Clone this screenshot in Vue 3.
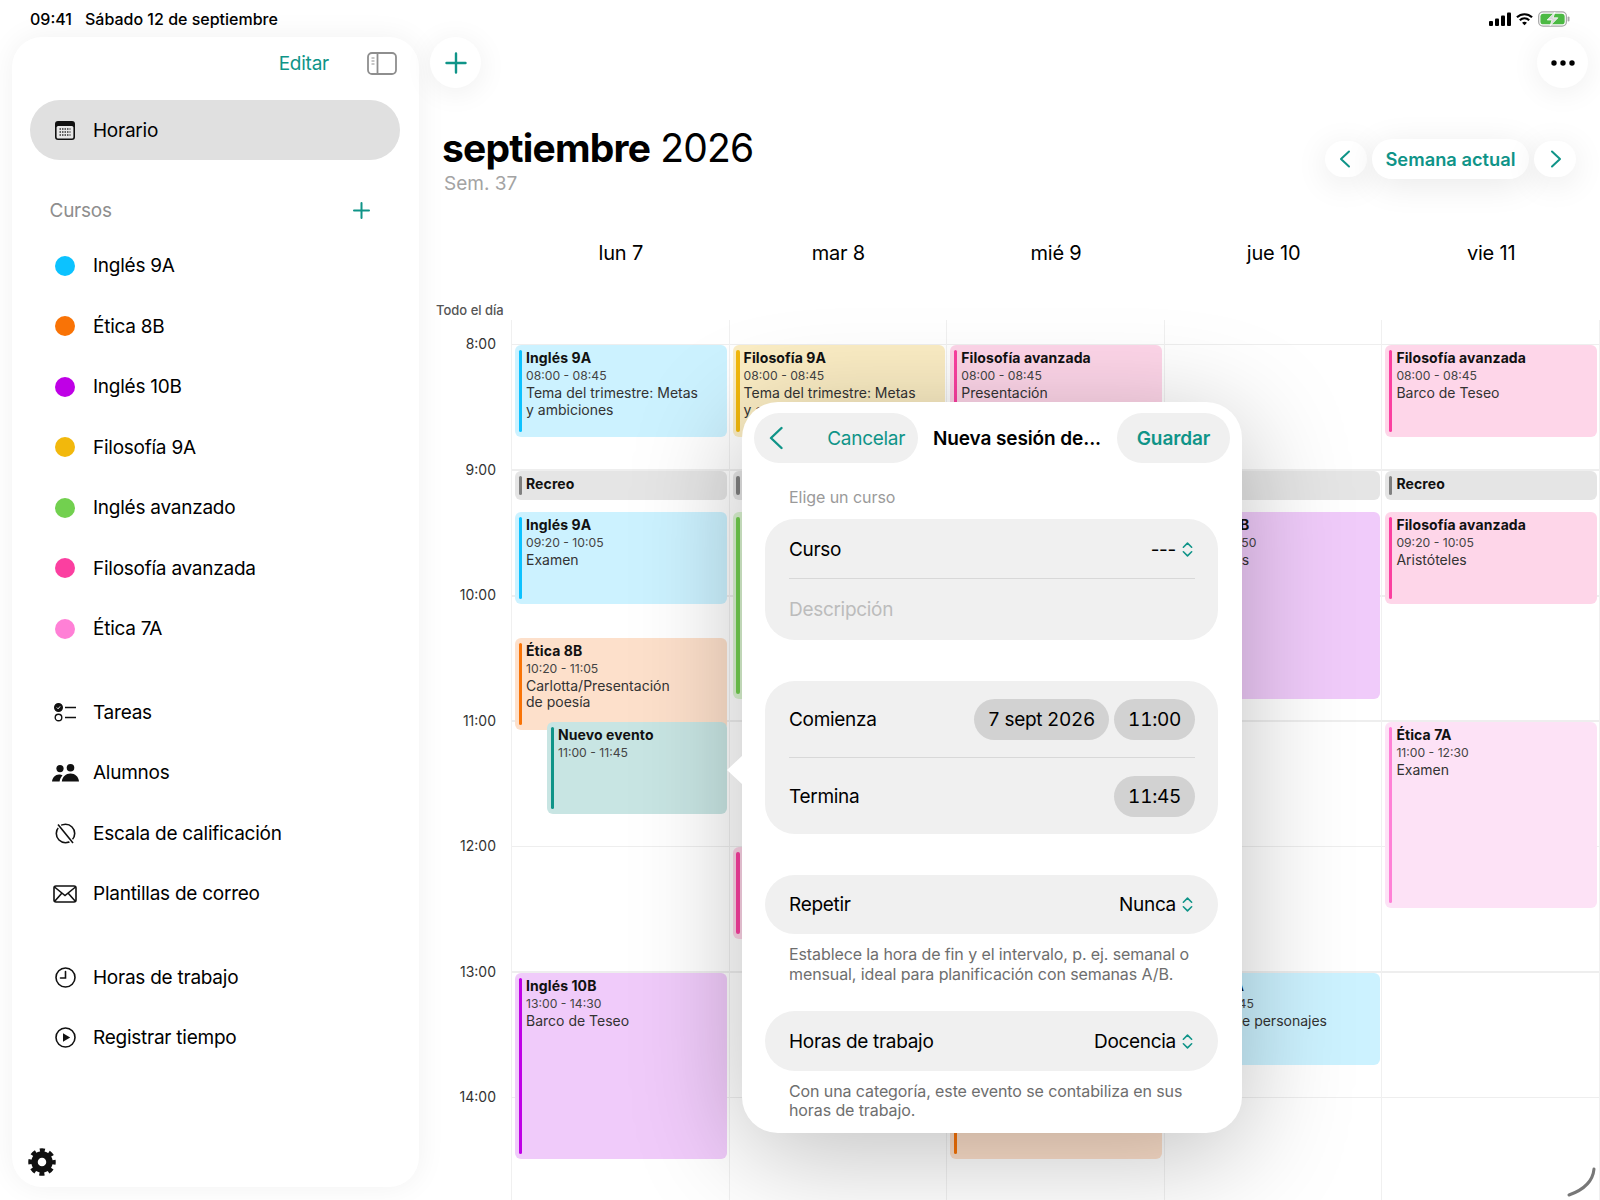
<script setup>
const courses = [
  { name: 'Inglés 9A', color: '#0cc2ff' },
  { name: 'Ética 8B', color: '#f97306' },
  { name: 'Inglés 10B', color: '#bf00e6' },
  { name: 'Filosofía 9A', color: '#f2b80c' },
  { name: 'Inglés avanzado', color: '#72d04f' },
  { name: 'Filosofía avanzada', color: '#fb3fa0' },
  { name: 'Ética 7A', color: '#ff80d6' },
]
const toolsA = [
  { name: 'Tareas', icon: 'tasks' },
  { name: 'Alumnos', icon: 'people' },
  { name: 'Escala de calificación', icon: 'scale' },
  { name: 'Plantillas de correo', icon: 'mail' },
]
const toolsB = [
  { name: 'Horas de trabajo', icon: 'clock' },
  { name: 'Registrar tiempo', icon: 'play' },
]
const hours = ['8:00', '9:00', '10:00', '11:00', '12:00', '13:00', '14:00']
const HOUR = 125.5
const ev = (kind, title, s, e, time, note, extra) => ({ kind, title, s, e, time, note, ...extra })
const m = (h, mi = 0) => h * 60 + mi
const days = [
  { label: 'lun 7', events: [
    ev('blue', 'Inglés 9A', m(8), m(8, 45), '08:00 - 08:45', 'Tema del trimestre: Metas\ny ambiciones'),
    ev('gray', 'Recreo', m(9), m(9, 15), '', ''),
    ev('blue', 'Inglés 9A', m(9, 20), m(10, 5), '09:20 - 10:05', 'Examen'),
    ev('orange', 'Ética 8B', m(10, 20), m(11, 5), '10:20 - 11:05', 'Carlotta/Presentación\nde poesía'),
    ev('teal', 'Nuevo evento', m(11), m(11, 45), '11:00 - 11:45', '', { indent: true }),
    ev('purple', 'Inglés 10B', m(13), m(14, 30), '13:00 - 14:30', 'Barco de Teseo'),
  ] },
  { label: 'mar 8', events: [
    ev('yellow', 'Filosofía 9A', m(8), m(8, 45), '08:00 - 08:45', 'Tema del trimestre: Metas\ny ambiciones'),
    ev('gray', '', m(9), m(9, 15), '', ''),
    ev('green', '', m(9, 20), m(10, 50), '', ''),
    ev('hot', '', m(12), m(12, 45), '', ''),
  ] },
  { label: 'mié 9', events: [
    ev('hot', 'Filosofía avanzada', m(8), m(8, 45), '08:00 - 08:45', 'Presentación'),
    ev('orange', '', m(13), m(14, 30), '', ''),
  ] },
  { label: 'jue 10', events: [
    ev('gray', '', m(9), m(9, 15), '', ''),
    ev('purple', 'Inglés 10B', m(9, 20), m(10, 50), '09:20 - 10:50', 'Aristóteles'),
    ev('blue', 'Inglés 9A', m(13), m(13, 45), '13:00 - 13:45', 'Análisis de personajes'),
  ] },
  { label: 'vie 11', events: [
    ev('hot', 'Filosofía avanzada', m(8), m(8, 45), '08:00 - 08:45', 'Barco de Teseo'),
    ev('gray', 'Recreo', m(9), m(9, 15), '', ''),
    ev('hot', 'Filosofía avanzada', m(9, 20), m(10, 5), '09:20 - 10:05', 'Aristóteles'),
    ev('pink', 'Ética 7A', m(11), m(12, 30), '11:00 - 12:30', 'Examen'),
  ] },
]
const box = (e) => ({
  top: `${25 + ((e.s - 480) / 60) * HOUR}px`,
  height: `${((e.e - e.s) / 60) * HOUR - 2}px`,
})
</script>

<template>
  <div class="screen">
    <header class="status">
      <span class="clock">09:41</span>
      <span class="date">Sábado 12 de septiembre</span>
      <span class="status-icons">
        <svg width="22" height="14" viewBox="0 0 22 14"><rect x="0" y="9" width="4" height="5" rx="1" /><rect x="6" y="6.5" width="4" height="7.5" rx="1" /><rect x="12" y="3.5" width="4" height="10.5" rx="1" /><rect x="18" y="0.5" width="4" height="13.5" rx="1" /></svg>
        <svg width="17" height="14" viewBox="0 0 18 14" fill="none" stroke="#000" stroke-width="2.3"><path d="M1 5.2C5.6.9 12.4.9 17 5.2" /><path d="M4 8.3c2.9-2.5 7.1-2.5 10 0" /><path d="M9 13.6 6.4 10.9c1.5-1.2 3.7-1.2 5.2 0z" fill="#000" stroke="none" /></svg>
        <svg width="32" height="16" viewBox="0 0 33 16"><rect x="0.7" y="0.7" width="28.6" height="14.6" rx="4.5" fill="none" stroke="#a8a8a8" stroke-width="1.3" /><rect x="2.5" y="2.5" width="25" height="11" rx="3" fill="#4cb944" /><rect x="30.5" y="5.5" width="2" height="5" rx="1" fill="#a8a8a8" /><path d="M17.5 1 9.5 9h5l-2 6 8-8.2h-5z" fill="#d8d8d8" stroke="#fff" stroke-width=".8" /></svg>
      </span>
    </header>

    <div class="body">
      <aside class="sidebar">
        <div class="side-top">
          <span class="edit">Editar</span>
          <svg class="toggle" width="30" height="23" viewBox="0 0 30 23" fill="none" stroke="#8e8e8e" stroke-width="1.8"><rect x="1" y="1" width="28" height="21" rx="4" /><path d="M10.500 1v21" /><path d="M4.500 6h3M4.500 9h3M4.500 12h3" stroke-width="1.2" /></svg>
        </div>
        <div class="item active">
          <span class="ico">
            <svg width="20" height="19" viewBox="0 0 20 19"><rect width="20" height="19" rx="3" fill="#111" /><rect x="1.600" y="5" width="16.800" height="12.400" rx="1.500" fill="#e8e8e8" /><path d="M4.500 8h11M4.500 11h11M4.500 14h11" stroke="#333" stroke-width="1.5" stroke-dasharray="1.5 1" /></svg>
          </span>
          Horario
        </div>
        <div class="section">
          <span>Cursos</span>
          <svg width="17" height="17" viewBox="0 0 17 17" stroke="#0f9488" stroke-width="2" stroke-linecap="round"><path d="M8.500 1v15M1 8.500h15" /></svg>
        </div>
        <div v-for="c in courses" :key="c.name" class="item">
          <span class="ico"><i class="dot" :style="{ background: c.color }"></i></span>
          {{ c.name }}
        </div>
        <div class="spacer"></div>
        <div v-for="t in toolsA" :key="t.name" class="item">
          <span class="ico">
            <svg v-if="t.icon === 'tasks'" width="23" height="19" viewBox="0 0 23 19" fill="none" stroke="#111" stroke-width="1.4"><circle cx="4.500" cy="4.500" r="3.800" fill="#111" /><path d="m2.800 4.500 1.300 1.300 2-2.400" stroke="#fff" stroke-width="1" /><circle cx="4.500" cy="14.500" r="3.300" /><path d="M11 4.500h11M11 14.500h11" /></svg>
            <svg v-else-if="t.icon === 'people'" width="27" height="18" viewBox="0 0 27 18" fill="#111"><circle cx="8" cy="4.600" r="3.600" /><circle cx="18.500" cy="3.800" r="3.800" /><path d="M0 17.500c.5-4 3.400-7 7-7 1.500 0 2.600.3 3.500 1-1.600 1.500-2.600 3.600-2.900 6zM9.800 17.500c.6-5 4.200-8 8.700-8s8.100 3 8.500 8z" /></svg>
            <svg v-else-if="t.icon === 'scale'" width="21" height="21" viewBox="0 0 21 21" fill="none" stroke="#111" stroke-width="1.6"><circle cx="10.500" cy="10.500" r="9.200" /><path d="M3 1.500 18 20" stroke="#fff" stroke-width="4" /><path d="M3 1.500 18 20" /></svg>
            <svg v-else width="24" height="18" viewBox="0 0 24 18" fill="none" stroke="#111" stroke-width="1.6"><rect x="1" y="1" width="22" height="16" rx="2" /><path d="m1.500 2 10.500 8.500L22.500 2M1.500 16.500l7.500-8.500M22.500 16.500 15 8" /></svg>
          </span>
          {{ t.name }}
        </div>
        <div class="spacer"></div>
        <div v-for="t in toolsB" :key="t.name" class="item">
          <span class="ico">
            <svg v-if="t.icon === 'clock'" width="21" height="21" viewBox="0 0 21 21" fill="none" stroke="#111" stroke-width="1.6"><circle cx="10.500" cy="10.500" r="9.500" /><path d="M10.500 4.500v6.500H5.500" stroke-linecap="round" /></svg>
            <svg v-else width="21" height="21" viewBox="0 0 21 21" fill="none" stroke="#111" stroke-width="1.6"><circle cx="10.500" cy="10.500" r="9.500" /><path d="M8 6.200 15.200 10.500 8 14.800z" fill="#111" stroke="none" /></svg>
          </span>
          {{ t.name }}
        </div>
        <div class="gear">
          <svg width="28" height="28" viewBox="0 0 28 28" fill="none" stroke="#111"><circle cx="14" cy="14" r="7.500" stroke-width="6.500" /><circle cx="14" cy="14" r="11.500" stroke-width="4.500" stroke-dasharray="4.900 4.130" stroke-dashoffset="2.450" /></svg>
        </div>
      </aside>

      <main class="main">
        <div class="toolbar">
          <button class="round">
            <svg width="22" height="22" viewBox="0 0 22 22" stroke="#0f9488" stroke-width="2.400" stroke-linecap="round"><path d="M11 1.500v19M1.500 11h19" /></svg>
          </button>
          <button class="round">
            <svg width="24" height="6" viewBox="0 0 24 6" fill="#000"><circle cx="3" cy="3" r="2.700" /><circle cx="12" cy="3" r="2.700" /><circle cx="21" cy="3" r="2.700" /></svg>
          </button>
        </div>

        <div class="heading">
          <div>
            <h1><b>septiembre</b> 2026</h1>
            <div class="week">Sem. 37</div>
          </div>
          <div class="nav">
            <button class="nav-round">
              <svg class="prev" width="12" height="18" viewBox="0 0 12 18" fill="none" stroke="#0f9488" stroke-width="2" stroke-linecap="round" stroke-linejoin="round"><path d="M10 1.500 2 9l8 7.500" /></svg>
            </button>
            <button class="nav-pill">Semana actual</button>
            <button class="nav-round">
              <svg class="next" width="12" height="18" viewBox="0 0 12 18" fill="none" stroke="#0f9488" stroke-width="2" stroke-linecap="round" stroke-linejoin="round"><path d="m2 1.500 8 7.500-8 7.500" /></svg>
            </button>
          </div>
        </div>

        <div class="day-heads">
          <span v-for="d in days" :key="d.label">{{ d.label }}</span>
        </div>
        <div class="allday">Todo el día</div>

        <div class="grid">
          <div class="times">
            <div v-for="h in hours" :key="h" class="time">{{ h }}</div>
          </div>
          <div v-for="d in days" :key="d.label" class="day">
            <div
              v-for="e in d.events"
              :key="e.kind + e.s"
              class="event"
              :class="[e.kind, { indent: e.indent }]"
              :style="box(e)"
            >
              <div v-if="e.title" class="e-title">{{ e.title }}</div>
              <div v-if="e.time" class="e-time">{{ e.time }}</div>
              <div v-if="e.note" class="e-note">{{ e.note }}</div>
            </div>
          </div>
        </div>
      </main>
    </div>

    <section class="popover">
      <span class="arrow"></span>
      <div class="pop-nav">
        <div class="pill cancel">
          <svg width="14" height="24" viewBox="0 0 14 24" fill="none" stroke="#0f9488" stroke-width="2.400" stroke-linecap="round" stroke-linejoin="round"><path d="M12.500 2 2 12l10.500 10" /></svg>
          <span>Cancelar</span>
        </div>
        <div class="pop-title">Nueva sesión de...</div>
        <div class="pill save">Guardar</div>
      </div>
      <div class="label">Elige un curso</div>
      <div class="group first">
        <div class="row r59">
          <span>Curso</span>
          <span class="value">
            ---
            <svg class="updown" width="11" height="15" viewBox="0 0 12 16" fill="none" stroke="#0f9488" stroke-width="1.700" stroke-linecap="round" stroke-linejoin="round"><path d="m1.500 5.500 4.500-4.500 4.500 4.500M1.500 10.500l4.500 4.500 4.500-4.500" /></svg>
          </span>
        </div>
        <div class="divider"></div>
        <div class="row r60 placeholder">Descripción</div>
      </div>
      <div class="group gap">
        <div class="row r76">
          <span>Comienza</span>
          <span class="chips"><span class="chip">7 sept 2026</span><span class="chip">11:00</span></span>
        </div>
        <div class="divider"></div>
        <div class="row r76">
          <span>Termina</span>
          <span class="chips"><span class="chip">11:45</span></span>
        </div>
      </div>
      <div class="group gap">
        <div class="row r59b">
          <span>Repetir</span>
          <span class="value">
            Nunca
            <svg class="updown" width="11" height="15" viewBox="0 0 12 16" fill="none" stroke="#0f9488" stroke-width="1.700" stroke-linecap="round" stroke-linejoin="round"><path d="m1.500 5.500 4.500-4.500 4.500 4.500M1.500 10.500l4.500 4.500 4.500-4.500" /></svg>
          </span>
        </div>
      </div>
      <p class="help">Establece la hora de fin y el intervalo, p. ej. semanal o mensual, ideal para planificación con semanas A/B.</p>
      <div class="group small-gap">
        <div class="row r59b">
          <span>Horas de trabajo</span>
          <span class="value">
            Docencia
            <svg class="updown" width="11" height="15" viewBox="0 0 12 16" fill="none" stroke="#0f9488" stroke-width="1.700" stroke-linecap="round" stroke-linejoin="round"><path d="m1.500 5.500 4.500-4.500 4.500 4.500M1.500 10.500l4.500 4.500 4.500-4.500" /></svg>
          </span>
        </div>
      </div>
      <p class="help">Con una categoría, este evento se contabiliza en sus horas de trabajo.</p>
    </section>

    <svg class="pencil" width="30" height="30" viewBox="0 0 30 30" fill="none" stroke="#777" stroke-width="3" stroke-linecap="round"><path d="M28 2c-1 11-8 20-25 26" /></svg>
  </div>
</template>

<style scoped>
.screen {
  position: relative;
  width: 1600px;
  height: 1200px;
  overflow: hidden;
  background: #fff;
  color: #000;
  font-family: Inter, "Liberation Sans", sans-serif;
}
button { border: 0; padding: 0; font: inherit; cursor: pointer; }

.status {
  height: 37px;
  display: flex;
  align-items: center;
  padding: 0 30px;
  font-size: 16px;
  font-weight: 500;
  box-sizing: border-box;
}
.date { margin-left: 13px; }
.status-icons { margin-left: auto; display: flex; align-items: center; gap: 5px; }

.body { display: flex; align-items: flex-start; }

.sidebar {
  width: 407px;
  height: 1150px;
  margin-left: 12px;
  flex: none;
  display: flex;
  flex-direction: column;
  background: #fff;
  border-radius: 30px;
  box-shadow: 0 0 30px rgba(0, 0, 0, .06);
  box-sizing: border-box;
  font-size: 19px;
  letter-spacing: -.25px;
}
.side-top {
  height: 52px;
  flex: none;
  display: flex;
  align-items: center;
  justify-content: flex-end;
  padding-right: 22px;
  margin-bottom: 11px;
}
.edit { color: #0f9488; margin-right: 38px; }
.item {
  flex: none;
  height: 60.500px;
  margin: 0 19px 0 18px;
  padding: 1px 0 0 19px;
  box-sizing: border-box;
  display: flex;
  align-items: center;
  border-radius: 30px;
}
.item.active { background: #e0e0e0; height: 60px; }
.ico { width: 32px; margin-right: 12px; display: flex; justify-content: center; align-items: center; flex: none; }
.dot { display: block; width: 20px; height: 20px; border-radius: 50%; }
.section {
  flex: none;
  height: 50px;
  margin: 25px 0 0;
  padding: 0 49px 0 37.500px;
  display: flex;
  align-items: center;
  justify-content: space-between;
  color: #8e8e8e;
}
.spacer { flex: none; height: 23px; }
.gear { margin-top: auto; padding: 0 0 11px 16px; line-height: 0; }

.main { flex: 1; min-width: 0; }
.toolbar { display: flex; justify-content: space-between; padding: 0 12px 0 11px; }
.round {
  width: 51px;
  height: 51px;
  border-radius: 50%;
  background: #fff;
  box-shadow: 0 4px 30px rgba(0, 0, 0, .07);
  display: flex;
  align-items: center;
  justify-content: center;
}
.heading {
  display: flex;
  justify-content: space-between;
  align-items: flex-start;
  margin-top: 35px;
  padding: 0 24px 0 23px;
}
h1 { margin: 0; font-size: 39px; line-height: 50px; font-weight: 400; letter-spacing: -.8px; }
h1 b { font-weight: 700; }
.week { font-size: 19px; line-height: 22px; color: #a3a3a3; margin-left: 2px; }
.nav { display: flex; align-items: center; gap: 5px; margin-top: 16px; }
.nav-round, .nav-pill {
  background: #fff;
  box-shadow: 0 6px 34px rgba(0, 0, 0, .09);
  display: flex;
  align-items: center;
  justify-content: center;
}
.nav-round { width: 42px; height: 36px; border-radius: 18px; }
.prev { margin-right: 2px; }
.next { margin-left: 2px; }
.nav-pill {
  width: 157px;
  height: 40px;
  border-radius: 20px;
  color: #0f9488;
  font-size: 18.300px;
  font-weight: 600;
}
.day-heads {
  display: flex;
  margin: 46px 0 0 93px;
  height: 24px;
  font-size: 20px;
  line-height: 24px;
  letter-spacing: -.2px;
}
.day-heads span { flex: 1; text-align: center; }
.allday {
  height: 55px;
  box-sizing: border-box;
  padding: 36px 0 0 17px;
  font-size: 13px;
  line-height: 18px;
  font-weight: 500;
  color: #555;
}
.grid { display: flex; height: 900px; }
.times {
  width: 93px;
  flex: none;
  padding-top: 14px;
  box-sizing: border-box;
  border-right: 1px solid #f0f0f0;
}
.time {
  height: 125.500px;
  padding-right: 15px;
  box-sizing: border-box;
  text-align: right;
  font-size: 14px;
  line-height: 20px;
  color: #333;
}
.day {
  flex: 1;
  position: relative;
  border-right: 1px solid #f0f0f0;
  background-image: repeating-linear-gradient(to bottom, #eeeeee 0, #eeeeee 1.500px, transparent 1.500px, transparent 125.500px);
  background-position: 0 24px;
  background-repeat: no-repeat;
  background-size: 100% 900px;
}
.event {
  position: absolute;
  left: 3px;
  right: 1.500px;
  padding: 2px 6px 0 11px;
  border-radius: 6px;
  box-sizing: border-box;
  overflow: hidden;
  font-size: 14px;
  color: #333;
}
.event::before {
  content: "";
  position: absolute;
  left: 3.500px;
  top: 5px;
  bottom: 5px;
  width: 3.500px;
  border-radius: 2px;
  background: var(--bar);
}
.event.indent { left: 35px; }
.e-title { font-size: 14px; line-height: 21px; font-weight: 700; color: #111; letter-spacing: .1px; }
.e-time { font-size: 12.200px; line-height: 15px; color: #444; }
.e-note { font-size: 14px; line-height: 16.500px; margin-top: 2px; white-space: pre-line; color: #333; }
.blue { background: #ccf2ff; --bar: #0cc2ff; }
.orange { background: #fde0cb; --bar: #f97306; }
.purple { background: #f0cbfa; --bar: #bf00e6; }
.yellow { background: #fbedc4; --bar: #f2b80c; }
.green { background: #dcf5d2; --bar: #72d04f; }
.hot { background: #fed6e9; --bar: #fb3fa0; }
.pink { background: #fde2f6; --bar: #ff80d6; }
.gray { background: #e5e5e5; --bar: #808080; }
.teal { background: #c8e5e3; --bar: #0f9488; }

.popover {
  position: absolute;
  left: 742px;
  top: 402px;
  width: 500px;
  height: 731px;
  background: #fff;
  border-radius: 36px;
  box-shadow: 0 20px 110px rgba(0, 0, 0, .26);
  box-sizing: border-box;
  padding: 11px 0 0;
  font-size: 19px;
  letter-spacing: -.3px;
}
.arrow {
  position: absolute;
  left: -15px;
  top: 353px;
  width: 16px;
  height: 30px;
  background: #fff;
  clip-path: polygon(0 50%, 100% 0, 100% 100%);
}
.pop-nav { display: flex; align-items: center; padding: 0 12px; height: 50px; }
.pill { background: #f0f0f0; border-radius: 25px; height: 50px; display: flex; align-items: center; color: #0f9488; }
.cancel { width: 164px; padding: 0 13px 0 15px; box-sizing: border-box; justify-content: space-between; }
.save { width: 113px; justify-content: center; font-weight: 600; letter-spacing: -.1px; }
.pop-title { flex: 1; text-align: center; font-weight: 600; letter-spacing: -.1px; margin-left: -1px; }
.label { margin: 24px 0 0 47px; font-size: 16px; line-height: 20px; color: #9a9a9a; letter-spacing: -.05px; }
.group { margin: 0 24px 0 23px; background: #f0f0f0; border-radius: 30px; padding: 0 23px 0 24px; }
.first { margin-top: 12px; }
.gap { margin-top: 41px; }
.small-gap { margin-top: 27px; }
.row { display: flex; align-items: center; justify-content: space-between; padding-top: 1px; box-sizing: border-box; }
.r59 { height: 59px; }
.r59b { height: 59.500px; }
.r60 { height: 60.500px; }
.r76 { height: 76px; }
.divider { height: 1px; background: #d8d8d8; }
.placeholder { color: #bcbcbc; }
.value { display: flex; align-items: center; gap: 6px; }
.updown { margin-right: 2px; }
.chips { display: flex; gap: 5px; }
.chip {
  height: 41px;
  display: flex;
  align-items: center;
  padding: 0 14px;
  background: #d2d2d2;
  border-radius: 21px;
  font-variant-numeric: tabular-nums;
}
.help { margin: 11px 47px 0; font-size: 16px; line-height: 19.500px; color: #6e6e6e; letter-spacing: -.1px; }
.pencil { position: absolute; left: 1566px; top: 1167px; }
</style>

<style>
html, body { margin: 0; background: #fff; }
</style>
